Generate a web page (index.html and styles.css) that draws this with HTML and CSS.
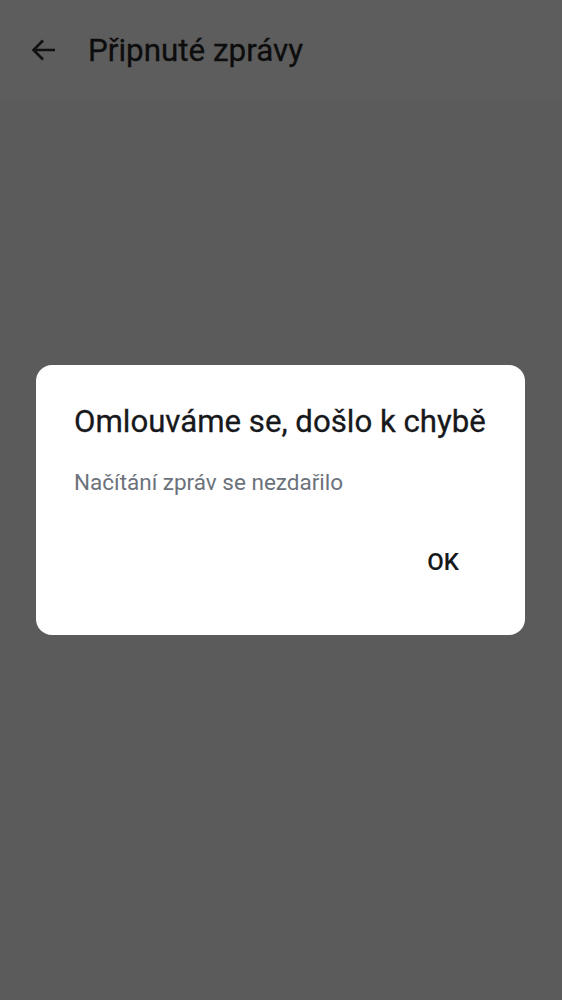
FILE: index.html
```html
<!DOCTYPE html>
<html lang="cs">
<head>
<meta charset="utf-8">
<link rel="stylesheet" href="styles.css">
</head>
<body>
<div class="screen">
  <header class="appbar">
    <svg class="back" width="28" height="28" viewBox="0 0 28 28" aria-hidden="true">
      <path d="M25 14H4M13 4.5L3.5 14l9.5 9.5" fill="none" stroke="#111" stroke-width="2.6" stroke-linecap="butt" stroke-linejoin="miter"/>
    </svg>
    <h1 class="title">Připnuté zprávy</h1>
  </header>
  <div class="scrim">
    <div class="dialog">
      <h2 class="dialog-title">Omlouváme se, došlo k chybě</h2>
      <p class="dialog-text">Načítání zpráv se nezdařilo</p>
      <div class="dialog-actions">
        <button class="btn">OK</button>
      </div>
    </div>
  </div>
</div>
</body>
</html>
```

FILE: styles.css
```css
html, body {
  margin: 0;
  padding: 0;
  height: 100%;
}
body {
  background: #5b5b5b;
  font-family: Roboto, "Noto Sans", sans-serif;
}
.screen {
  position: relative;
  width: 562px;
  height: 1000px;
  background: #5b5b5b;
  overflow: hidden;
}
.appbar {
  display: flex;
  align-items: center;
  height: 100px;
  padding-left: 30px;
  box-sizing: border-box;
  background: #5d5d5d;
}
.back {
  display: block;
  flex: none;
}
.title {
  margin: 0 0 0 30px;
  font-size: 31.4px;
  font-weight: 400;
  color: #0d0d0d;
  -webkit-text-stroke: 0.3px #0d0d0d;
}
.scrim {
  position: absolute;
  inset: 0;
  display: flex;
  align-items: center;
  justify-content: center;
  padding-right: 1px;
}
.dialog {
  box-sizing: border-box;
  width: 489px;
  height: 270px;
  background: #fff;
  border-radius: 16px;
  padding: 36px 36px 0 38px;
  display: flex;
  flex-direction: column;
}
.dialog-title {
  margin: 0;
  font-size: 31.2px;
  font-weight: 400;
  line-height: 42px;
  color: #17181b;
  -webkit-text-stroke: 0.3px #17181b;
  white-space: nowrap;
}
.dialog-text {
  margin: 24px 0 0;
  font-size: 22.5px;
  line-height: 30px;
  color: #6c727b;
}
.dialog-actions {
  display: flex;
  justify-content: flex-end;
  margin-top: 50px;
}
.btn {
  border: 0;
  background: none;
  font-family: Roboto, "Noto Sans", sans-serif;
  font-size: 24px;
  font-weight: 500;
  color: #17181b;
  padding: 0 30px 0 0;
  line-height: 30px;
}
```
